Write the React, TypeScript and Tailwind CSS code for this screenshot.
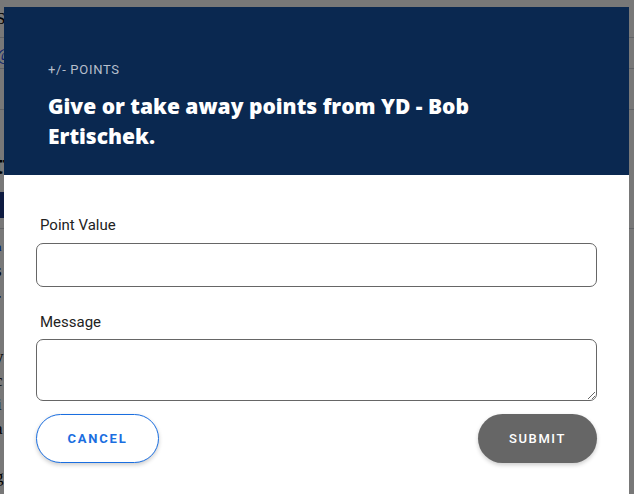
import React from "react";

function BackgroundPage() {
  return (
    <div className="flex h-full w-full flex-col bg-white font-['Liberation_Serif',serif] text-[17px] text-black">
      <div className="h-[38px] border-b border-gray-300 pl-0 pt-[6px]">
        <span className="-ml-[4px]">Season</span>
      </div>
      <div className="h-[31px] border-b border-gray-300 pt-[4px] text-blue-700">
        <span className="-ml-[3px]">@</span>
      </div>
      <div className="h-[41px] border-b border-gray-300" />
      <div className="pt-[40px] font-['Liberation_Sans',sans-serif] text-[26px] font-bold leading-[30px]">
        <span className="-ml-[6px]">ttt</span>
      </div>
      <div className="mt-[12px] h-[26px] w-[40px] bg-[#1e3a8a]" />
      <div className="mt-[10px] h-px w-full bg-gray-300" />
      <div className="flex flex-col pt-[6px] leading-[24px]">
        <span className="-ml-[5px] text-[13px] font-bold text-blue-700">a</span>
        <span className="-ml-[5px]">s</span>
        <span className="-ml-[5px] mt-[4px]">r</span>
        <span className="mt-[34px] -ml-[5px]">y</span>
        <span className="-ml-[5px]">c</span>
        <span className="-ml-[3px]">i</span>
        <span className="-ml-[5px]">a</span>
        <span className="mt-[24px] -ml-[5px]">g</span>
      </div>
    </div>
  );
}

export default function App() {
  return (
    <div className="relative h-[494px] w-[634px] overflow-hidden">
      <BackgroundPage />
      <div className="absolute inset-0 bg-black/[0.53]" />
      <div className="absolute left-[4px] top-[7px] w-[625px] bg-white font-['Roboto',sans-serif]">
        <div className="h-[168px] bg-[#0a2850] px-[44px] pt-[54px]">
          <p className="text-[13px] leading-[18px] tracking-[0.7px] text-[#b6bfcc]">+/- POINTS</p>
          <h2 className="mt-[12px] max-w-[520px] font-['Open_Sans',sans-serif] text-[21px] font-extrabold leading-[30px] text-white">
            Give or take away points from YD - Bob Ertischek.
          </h2>
        </div>
        <div className="flex flex-col px-[32px] pb-[40px] pt-[40px]">
          <label className="pl-[4px] text-[15px] leading-[20px] text-[#222]">Point Value</label>
          <input
            type="text"
            className="mt-[8px] h-[44px] w-full rounded-[7px] border border-[#666] px-3 outline-none"
          />
          <label className="mt-[25px] pl-[4px] text-[15px] leading-[20px] text-[#222]">Message</label>
          <textarea className="mt-[7px] h-[62px] w-full rounded-[7px] border border-[#666] px-3 outline-none" />
          <div className="mt-[13px] flex items-center justify-between">
            <button className="h-[49px] w-[123px] rounded-full border border-[#1a6ee0] bg-white text-[13px] font-bold tracking-[1.8px] text-[#1a6ee0] shadow-[0_2px_4px_rgba(0,0,0,0.2)]">
              CANCEL
            </button>
            <button className="h-[49px] w-[119px] rounded-full bg-[#666666] text-[13px] font-medium tracking-[1.6px] text-white shadow-[0_2px_4px_rgba(0,0,0,0.2)]">
              SUBMIT
            </button>
          </div>
        </div>
      </div>
    </div>
  );
}
